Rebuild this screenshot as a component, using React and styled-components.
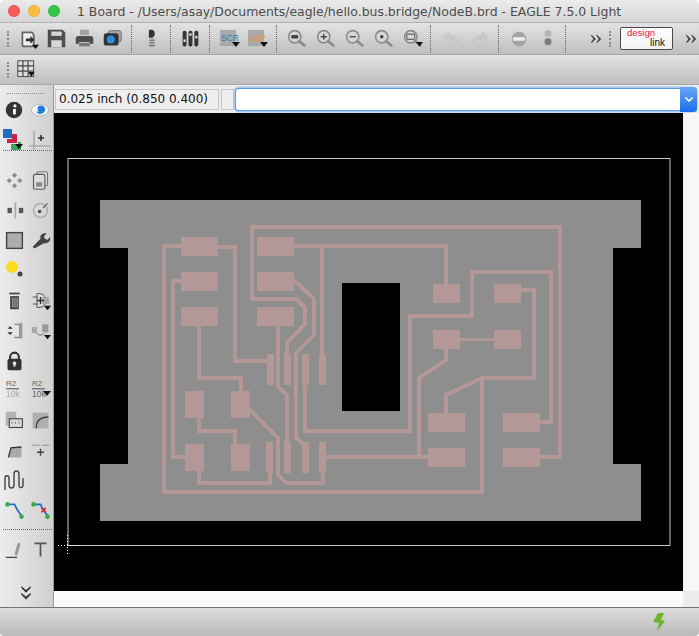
import React from 'react';
import styled, { createGlobalStyle } from 'styled-components';

const Global = createGlobalStyle`
  html, body { margin: 0; padding: 0; background: #fff; }
  body { font-family: "DejaVu Sans", sans-serif; }
`;

const Win = styled.div`
  width: 699px; height: 636px; display: flex; flex-direction: column;
  overflow: hidden; border-radius: 5px 5px 4px 4px;
`;
const TitleBar = styled.div`
  height: 22px; flex: none; display: flex; align-items: center; position: relative;
  background: linear-gradient(#ebebeb, #d5d5d5); border-bottom: 1px solid #b1b1b1;
`;
const Light = styled.span`
  width: 12px; height: 12px; border-radius: 50%; background: ${p => p.$c};
  box-shadow: inset 0 0 0 0.5px rgba(0,0,0,.12); margin-right: 8px;
`;
const Lights = styled.div`display: flex; padding-left: 8px; width: 77px; box-sizing: border-box;`;
const TitleText = styled.div`
  font: 12.45px "DejaVu Sans", sans-serif; color: #4c4c4c; white-space: nowrap;
`;
const Toolbar = styled.div`
  height: ${p => p.$h}px; flex: none; display: flex; align-items: center; box-sizing: border-box;
  background: linear-gradient(#e3e3e3, #bfbfbf); border-bottom: 1px solid #a8a8a8;
  padding-left: 7px;
`;
const Handle = styled.span`
  width: 0; height: 16px; border-left: 2px dotted #8a8a8a; flex: none; margin-right: ${p => p.$mr ?? 5}px;
`;
const Tool = styled.span`
  width: ${p => p.$w ?? 28}px; height: 28px; flex: none; display: flex; align-items: center; justify-content: center;
`;
const Sep = styled.span`
  width: 0; height: 28px; border-left: 1px dotted #666; flex: none; margin: 0 ${p => p.$m ?? 5}px 0 ${p => p.$ml ?? 5}px;
`;
const LinkBtn = styled.span`
  width: 53px; height: 23px; flex: none; box-sizing: border-box; border: 1px solid #4a4a4a; border-radius: 2px;
  background: linear-gradient(#fff, #f1f1f1); position: relative; margin: 0 3px 0 0;
`;
const LinkDesign = styled.span`
  position: absolute; left: 6px; top: -1px; font: 9.5px/12px "Liberation Sans", sans-serif; color: #e0103c;
`;
const LinkWord = styled.span`
  position: absolute; left: 29px; top: 9px; font: 10px/12px "Liberation Sans", sans-serif; color: #111;
`;
const Body = styled.div`flex: 1; display: flex; min-height: 0;`;
const Sidebar = styled.div`
  width: 54px; flex: none; box-sizing: border-box; display: flex; flex-direction: column; padding-top: 8px;
  background: linear-gradient(90deg, #ececec, #d0d0d0); border-right: 1px solid #9a9a9a;
`;
const SideHandle = styled.div`height: 0; margin: 0 8px 0 7px; border-top: 1px dotted #8c8c8c;`;
const SideGrid = styled.div`
  display: grid; grid-template-columns: 26px 26px; grid-auto-rows: 20px; row-gap: 10px; padding-left: 1px;
  margin-top: ${p => p.$mt}px;
`;
const SideCell = styled.span`display: flex; align-items: center; justify-content: center;`;
const SideSep = styled.div`height: 0; margin: ${p => p.$mt ?? 0}px 1px 0 3px; border-top: 1px dotted #666;`;
const SideMore = styled.div`margin-top: auto; padding: 0 0 0 16px; height: 24px;`;
const Workspace = styled.div`flex: 1; display: flex; flex-direction: column; min-width: 0;`;
const CmdRow = styled.div`
  height: 28px; flex: none; display: flex; align-items: center; background: #ececec; box-sizing: border-box; padding: 0 4px 0 1px;
`;
const CoordBox = styled.div`
  width: 164px; height: 21px; flex: none; box-sizing: border-box; padding-left: 3px;
  border: 1px solid #c6c6c6; background: #eeeeee; font: 12px/19px "DejaVu Sans", sans-serif; color: #111; white-space: nowrap;
`;
const SmallBox = styled.div`
  width: 13px; height: 21px; flex: none; box-sizing: border-box; margin: 0 2px 0 2px;
  border: 1px solid #c6c6c6; background: #eeeeee;
`;
const Combo = styled.div`
  flex: 1; height: 21px; display: flex; justify-content: flex-end; position: relative; background: #fff; border-radius: 3px;
  box-shadow: 0 0 0 1px #5e9ee8, 0 0 0 2.5px #a8c8f0;
`;
const ComboBtn = styled.span`
  width: 17px; margin: -2px -2px -2px 0; border-radius: 0 3px 3px 0; background: linear-gradient(#68a8f5, #1a6fee);
  display: flex; align-items: center; justify-content: center;
`;
const Canvas = styled.div`
  flex: 1; display: grid; grid-template-columns: 1fr 16px; grid-template-rows: 478px 16px; min-height: 0; background: #fafafa;
`;
const Sheet = styled.svg`display: block; width: 629px; height: 478px; background: #000;`;
const ScrollV = styled.div`background: #f7f7f7; border-left: 1px solid #efefef;`;
const ScrollH = styled.div`background: #fbfbfb;`;
const ScrollC = styled.div`background: #ececec;`;
const Status = styled.div`
  height: 29px; flex: none; box-sizing: border-box; border-top: 1px solid #757575; display: flex; align-items: center; justify-content: flex-end;
  background: linear-gradient(#dedede, #b9b9b9); padding-right: 33px;
`;
const IconSvg = styled.svg`display: block; flex: none; overflow: visible;`;
const IconLabel = styled.text`font: ${p => p.$s ?? 8}px "Liberation Sans", sans-serif; fill: ${p => p.$c};`;

const Ico = ({ s = 21, children }) => <IconSvg width={s} height={s} viewBox="0 0 24 24">{children}</IconSvg>;
const Drop = ({ x = 18, y = 19 }) => <path d={`M${x - 4} ${y}h8l-4 5z`} fill="#111" />;

const Import = () => <Ico><path d="M5 5h11l2 3v11a2 2 0 0 1-2 2H7a2 2 0 0 1-2-2z" fill="#eee" stroke="#666" strokeWidth="2" /><path d="M9 12h5V9l5 4.5L14 18v-3H9z" fill="#333" /><Drop x={20} y={19} /></Ico>;
const Save = () => <Ico><path d="M2 2h17l3 3v17H2z" fill="#4d4d4d" /><rect x="6" y="4" width="12" height="5" fill="#d5d5d5" /><rect x="6" y="14" width="12" height="8" fill="#d5d5d5" /></Ico>;
const Print = () => <Ico><rect x="7" y="2" width="10" height="6" fill="#a2a2a2" /><path d="M2 12a3 3 0 0 1 3-3h14a3 3 0 0 1 3 3v6h-4v-2H6v2H2z" fill="#4d4d4d" /><rect x="6" y="17" width="12" height="4" fill="#777" /></Ico>;
const Cam = () => <Ico><rect x="7" y="3" width="15" height="13" rx="3" fill="#a8a8a8" stroke="#666" /><rect x="2" y="6" width="17" height="14" rx="3" fill="#333" /><circle cx="10" cy="13" r="4.5" fill="#2b8ee0" /></Ico>;
const Part = () => <Ico><path d="M9 2h4a5 5 0 0 1 0 9H9z" fill="#333" /><rect x="10" y="12" width="5" height="10" fill="#aaa" /><path d="M9 14h7M9 17h7M9 20h7" stroke="#777" /></Ico>;
const Sliders = () => <Ico><rect x="3" y="3" width="4.5" height="18" rx="2" fill="#333" /><rect x="9.7" y="3" width="4.5" height="18" rx="2" fill="#333" /><rect x="16.4" y="3" width="4.5" height="18" rx="2" fill="#333" /><rect x="4" y="13" width="2.5" height="3" fill="#ddd" /><rect x="10.7" y="6" width="2.5" height="3" fill="#ddd" /><rect x="17.4" y="9" width="2.5" height="3" fill="#ddd" /></Ico>;
const Script = ({ t, c }) => <Ico s={24}><rect x="3" y="3" width="16" height="16" fill="#a9a9a9" /><IconLabel x="4" y="14" $s="8.5" $c={c}>{t}</IconLabel><Drop x={19} y={15} /></Ico>;
const Zoom = ({ k, drop }) => <Ico><circle cx="10" cy="10" r="7" fill="#d6d6d6" stroke="#8b8b8b" strokeWidth="1.8" /><path d="M15 15l6 5" stroke="#8b8b8b" strokeWidth="3" strokeLinecap="round" />
  {k === 'fit' && <rect x="6" y="8" width="8" height="4" rx="1" fill="#444" />}
  {k === 'in' && <path d="M6.5 10h7M10 6.5v7" stroke="#444" strokeWidth="1.5" />}
  {k === 'out' && <path d="M6.5 10h7" stroke="#444" strokeWidth="1.5" />}
  {k === 'sel' && <circle cx="10" cy="10" r="2" fill="#444" />}
  {k === 'last' && <rect x="5.5" y="7" width="9" height="6" rx="1" fill="none" stroke="#666" strokeWidth="1.3" />}
  {drop && <Drop x={20} y={16} />}</Ico>;
const Undo = ({ flip }) => <Ico><g transform={flip ? 'matrix(-1 0 0 1 24 0)' : undefined}><path d="M3 10l7-5v3c6 0 10 3 11 9-2-3-6-4-11-4v3z" fill="#c9c9c9" stroke="#c2c2c2" /></g></Ico>;
const Stop = () => <Ico s={22}><circle cx="12" cy="12" r="8" fill="#a3a3a3" /><rect x="5.5" y="10" width="13" height="4" rx="1" fill="#eee" /></Ico>;
const Dots = () => <Ico s={22}><circle cx="12" cy="6" r="3.6" fill="#b5b5b5" /><circle cx="12" cy="15" r="3.8" fill="#7d7d7d" /></Ico>;
const More = () => <Ico s={16}><path d="M4 5l4 1 6 6-6 6-4 1 5-7zM12 5l4 1 6 6-6 6-4 1 5-7z" fill="#444" stroke="#fff" strokeWidth=".8" /></Ico>;
const Grid3 = () => <Ico s={19}><rect x="1" y="1" width="20" height="20" fill="#ddd" stroke="#444" strokeWidth="1.2" /><path d="M7.5 1v20M14 1v20M1 7.5h20M1 14h20" stroke="#444" strokeWidth="1.5" /><path d="M14 15h8l-4 6z" fill="#111" /></Ico>;
const Info = () => <Ico s={22}><circle cx="12" cy="12" r="9" fill="#333" /><circle cx="13" cy="7.5" r="1.7" fill="#fff" /><path d="M11 11h3v6h-3z" fill="#fff" /></Ico>;
const Eye = () => <Ico s={24}><ellipse cx="12" cy="12" rx="8.5" ry="5.8" fill="#f4f4f4" stroke="#bbb" /><path d="M8 13c3 2 6 1 7-4l2 1c1 3-2 6-5 6-2 0-3-1-4-3z" fill="#1d7fd8" /><circle cx="13" cy="11" r="3.4" fill="#1d7fd8" /></Ico>;
const Layers = () => <Ico s={24}><rect x="1" y="1" width="9" height="9" fill="#1f6fc0" /><path d="M10 6h5v9H5v-4h5z" fill="#c8254c" /><path d="M9 16h7v-2h3v8H9z" fill="#3aa655" /><path d="M13 16h8l-4 5z" fill="#111" /></Ico>;
const Mark = () => <Ico s={24}><path d="M6 3v19M1 18h22" stroke="#aaa" strokeWidth="1.5" /><path d="M10 10h6M13 7v6" stroke="#333" strokeWidth="1.6" /></Ico>;
const Move = () => <Ico><path d="M12 3l3 3-3 3-3-3zM12 15l3 3-3 3-3-3zM3 12l3-3 3 3-3 3zM15 12l3-3 3 3-3 3z" fill="#8d8d8d" /></Ico>;
const Copy = () => <Ico><rect x="8" y="2" width="12" height="16" rx="2" fill="#ddd" stroke="#777" strokeWidth="1.3" /><rect x="4" y="5" width="13" height="17" rx="2" fill="#ddd" stroke="#555" strokeWidth="1.3" /><rect x="7" y="14" width="7" height="5" fill="#888" /></Ico>;
const Mirror = () => <Ico><rect x="12" y="3" width="2" height="18" fill="#aaa" /><rect x="4" y="9" width="5" height="6" fill="#555" /><rect x="17" y="9" width="5" height="6" fill="#555" /></Ico>;
const Rotate = () => <Ico><circle cx="12" cy="12" r="8" fill="none" stroke="#aaa" strokeWidth="1.6" /><circle cx="11" cy="13" r="2" fill="#444" /><path d="M15 9l5-5" stroke="#444" strokeWidth="1.2" /></Ico>;
const Group = () => <Ico><rect x="3" y="3" width="18" height="18" fill="#adadad" stroke="#444" strokeWidth="1.6" /></Ico>;
const Wrench = () => <Ico><path d="M5 21l-2-2 9-9c-1-4 2-7 7-6l-3 3 1 3 3 1 3-3c1 5-3 8-7 7z" fill="#444" /></Ico>;
const Yellow = () => <Ico s={24}><circle cx="10" cy="9" r="6" fill="#fbdc1e" /><circle cx="18" cy="16" r="2.5" fill="#444" /></Ico>;
const Trash = () => <Ico><rect x="6" y="3" width="12" height="2" fill="#444" /><path d="M7 7h10v15H7z" fill="#444" /><path d="M10 9v11M12.5 9v11M15 9v11" stroke="#ccc" /></Ico>;
const AddGate = () => <Ico><path d="M8 4v16h2c6 0 8-4 8-8s-2-8-8-8z" fill="none" stroke="#444" /><path d="M3 8h5M3 16h5" stroke="#444" /><rect x="14" y="8" width="8" height="8" fill="#aaa" /><path d="M8 12h8M12 8v8" stroke="#333" strokeWidth="1.5" /><Drop x={20} y={18} /></Ico>;
const Change = () => <Ico><path d="M4 10l3-3 3 3zM4 14l3 3 3-3z" fill="#333" /><path d="M12 5h6v15h-6" fill="none" stroke="#888" strokeWidth="1.5" /><rect x="18" y="3" width="3" height="18" fill="#999" /></Ico>;
const Swap = () => <Ico><rect x="2" y="8" width="6" height="7" fill="#aaa" /><rect x="14" y="5" width="7" height="9" fill="#999" /><path d="M8 15c2 3 6 3 8 0" fill="none" stroke="#555" /><Drop x={20} y={17} /></Ico>;
const Lock = () => <Ico><path d="M7 11V8a5 5 0 0 1 10 0v3" fill="none" stroke="#333" strokeWidth="2.4" /><rect x="4" y="10" width="16" height="13" rx="2" fill="#333" /><circle cx="12" cy="15" r="2" fill="#eee" /><rect x="11" y="15" width="2" height="4" fill="#eee" /></Ico>;
const Val = ({ drop }) => <Ico s={24}><IconLabel x="4" y="8" $s="8" $c="#666">R2</IconLabel><rect x="4" y="10" width="13" height="1.4" fill="#777" /><IconLabel x="4" y="19" $s="8.5" $c={drop ? '#666' : '#aaa'}>10k</IconLabel>{drop && <Drop x={19} y={13} />}</Ico>;
const Split = () => <Ico><rect x="2" y="2" width="12" height="16" fill="#b5b5b5" /><rect x="6" y="10" width="15" height="10" fill="#ddd" stroke="#444" strokeWidth="1.3" /><path d="M9 13v3M13 13v3M17 13v3" stroke="#777" /></Ico>;
const Miter = () => <Ico><rect x="3" y="3" width="18" height="18" fill="#ababab" opacity=".9" /><path d="M7 21c0-8 4-13 14-13" fill="none" stroke="#444" strokeWidth="1.5" /></Ico>;
const Chamfer = () => <Ico><path d="M6 19L9 8h11v12H6z" fill="#aaa" /><path d="M5 20L8 9l12-1" fill="none" stroke="#333" strokeWidth="1.5" /></Ico>;
const Wire = () => <Ico><path d="M2 6h9M13 6h9" stroke="#aaa" strokeWidth="1.5" /><path d="M12 10v8M8 14h8" stroke="#444" strokeWidth="1.6" /></Ico>;
const Meander = () => <Ico s={24}><path d="M3 22V10c0-3 4-3 4 0v7c0 4 5 4 5 0V6c0-4 5-4 5 0v11c0 4 4 3 4 0V10" fill="none" stroke="#444" strokeWidth="1.4" /></Ico>;
const Route = ({ x }) => <Ico><path d="M5 5h7l3 6 5 7" fill="none" stroke="#1f6fc0" strokeWidth="2" /><circle cx="4" cy="5" r="2.6" fill="#35a84b" /><circle cx="20" cy="19" r="2.6" fill="#35a84b" />{x && <path d="M13 9l5 5M18 9l-5 5" stroke="#d8203c" strokeWidth="1.8" />}</Ico>;
const Line = () => <Ico><path d="M2 21h13" stroke="#444" strokeWidth="1.4" /><path d="M14 17l3-11" stroke="#999" strokeWidth="3.5" strokeLinecap="round" /></Ico>;
const TextT = () => <Ico><path d="M5 4h14v2h-6v14h-2V6H5z" fill="#555" /></Ico>;
const DoubleDown = () => <Ico s={20}><path d="M6 3l6 5 6-5v3l-6 6-6-6zM6 11l6 5 6-5v3l-6 6-6-6z" fill="#333" stroke="#eee" strokeWidth=".7" /></Ico>;
const Caret = () => <svg width="10" height="7" viewBox="0 0 10 7"><path d="M1.5 1.5L5 5l3.5-3.5" fill="none" stroke="#fff" strokeWidth="1.6" /></svg>;
const Bolt = () => <IconSvg width="14" height="18" viewBox="0 0 14 18"><path d="M6 0h6L9 7l4 1-8 10 2-8-6-1z" fill="#6db52f" /></IconSvg>;

const smdH = [[181, 237], [181, 272], [181, 307], [257, 237], [257, 272], [257, 307], [428, 413], [503, 413], [428, 448], [503, 448]];
const smdV = [[267, 354], [284, 354], [302, 354], [319, 354], [266, 442], [284, 442], [302, 442], [319, 442]];
const smdS = [[185, 391], [231, 391], [185, 444], [231, 444]];
const smdW = [[433, 284], [494, 284], [433, 330], [494, 330]];
const traces = [
  'M181 246H164V492H482V378H534V290H521',
  'M482 378L446 395V413',
  'M218 247H235V361H267',
  'M181 281H173V457H185',
  'M199 326V378H241V391',
  'M199 418V431H235V444',
  'M250 410L278 438V475L286 483H323V473',
  'M199 471V483H270V473',
  'M278 326V387L287 395V442',
  'M294 280L314 299V335L296 353V438L306 446',
  'M540 457H560V227H252V299H297L305 308V324L287 343V354',
  'M294 246H446V284',
  'M322 246V354',
  'M305 385V431H410V316H472V272H551V422H540',
  'M446 349V360L419 378V457',
  'M326 457H428',
];

const Board = () => (
  <Sheet viewBox="54 113 629 478">
    <polygon points="100,200 641,200 641,248 613,248 613,464 641,464 641,521 100,521 100,464 128,464 128,248 100,248" fill="#8e8e8e" />
    <rect x="342" y="283" width="58" height="128" fill="#000" />
    <g fill="none" stroke="#b49797" strokeWidth="4" shapeRendering="crispEdges">
      {traces.map(d => <path key={d} d={d} />)}
      <path d="M460 339H494" strokeWidth="3" />
    </g>
    <g fill="#b49797">
      {smdH.map(([x, y]) => <rect key={`h${x}${y}`} x={x} y={y} width="37" height="19" />)}
      {smdV.map(([x, y]) => <rect key={`v${x}${y}`} x={x} y={y} width="7" height="31" />)}
      {smdS.map(([x, y]) => <rect key={`s${x}${y}`} x={x} y={y} width="19" height="27" />)}
      {smdW.map(([x, y]) => <rect key={`w${x}${y}`} x={x} y={y} width="27" height="19" />)}
    </g>
    <rect x="68" y="158.5" width="602" height="387" fill="none" stroke="#c8c8c8" />
    <path d="M67.5 535V556M58 545.5H80" stroke="#fff" strokeDasharray="1 2" />
  </Sheet>
);

const sideA = [<Info />, <Eye />, <Layers />, <Mark />];
const sideB = [<Move />, <Copy />, <Mirror />, <Rotate />, <Group />, <Wrench />, <Yellow />, null, <Trash />, <AddGate />, <Change />, <Swap />, <Lock />, null, <Val />, <Val drop />, <Split />, <Miter />, <Chamfer />, <Wire />, <Meander />, null, <Route />, <Route x />];
const sideC = [<Line />, <TextT />];

const Side = ({ items, mt }) => (
  <SideGrid $mt={mt}>{items.map((it, i) => <SideCell key={i}>{it}</SideCell>)}</SideGrid>
);

export default function App() {
  return (
    <Win>
      <Global />
      <TitleBar>
        <Lights><Light $c="#fc5b57" /><Light $c="#fdbb40" /><Light $c="#33c748" /></Lights>
        <TitleText>1 Board - /Users/asay/Documents/eagle/hello.bus.bridge/NodeB.brd - EAGLE 7.5.0 Light</TitleText>
      </TitleBar>
      <Toolbar $h={32}>
        <Handle />
        <Tool><Import /></Tool><Tool><Save /></Tool><Tool><Print /></Tool><Tool><Cam /></Tool>
        <Sep />
        <Tool><Part /></Tool>
        <Sep />
        <Tool><Sliders /></Tool>
        <Sep />
        <Tool><Script t="SCR" c="#2f78c8" /></Tool><Tool><Script t="ULP" c="#e8962a" /></Tool>
        <Sep />
        <Tool $w={29}><Zoom k="fit" /></Tool><Tool $w={29}><Zoom k="in" /></Tool><Tool $w={29}><Zoom k="out" /></Tool><Tool $w={29}><Zoom k="sel" /></Tool><Tool $w={29}><Zoom k="last" drop /></Tool>
        <Sep $ml={3} $m={4} />
        <Tool $w={30}><Undo /></Tool><Tool $w={30}><Undo flip /></Tool>
        <Sep $ml={3} $m={5} />
        <Tool $w={29}><Stop /></Tool><Tool $w={29}><Dots /></Tool>
        <Sep $ml={3} $m={15} />
        <Tool $w={28}><More /></Tool>
        <Handle $mr={9} />
        <LinkBtn><LinkDesign>design</LinkDesign><LinkWord>link</LinkWord></LinkBtn>
        <Tool $w={28}><More /></Tool>
      </Toolbar>
      <Toolbar $h={30}>
        <Handle $mr={8} />
        <Grid3 />
      </Toolbar>
      <Body>
        <Sidebar>
          <SideHandle />
          <Side items={sideA} mt={6} />
          <SideSep />
          <Side items={sideB} mt={19} />
          <SideSep $mt={9} />
          <Side items={sideC} mt={9} />
          <SideMore><DoubleDown /></SideMore>
        </Sidebar>
        <Workspace>
          <CmdRow>
            <CoordBox>0.025 inch (0.850 0.400)</CoordBox>
            <SmallBox />
            <Combo><ComboBtn><Caret /></ComboBtn></Combo>
          </CmdRow>
          <Canvas>
            <Board />
            <ScrollV />
            <ScrollH />
            <ScrollC />
          </Canvas>
        </Workspace>
      </Body>
      <Status><Bolt /></Status>
    </Win>
  );
}
